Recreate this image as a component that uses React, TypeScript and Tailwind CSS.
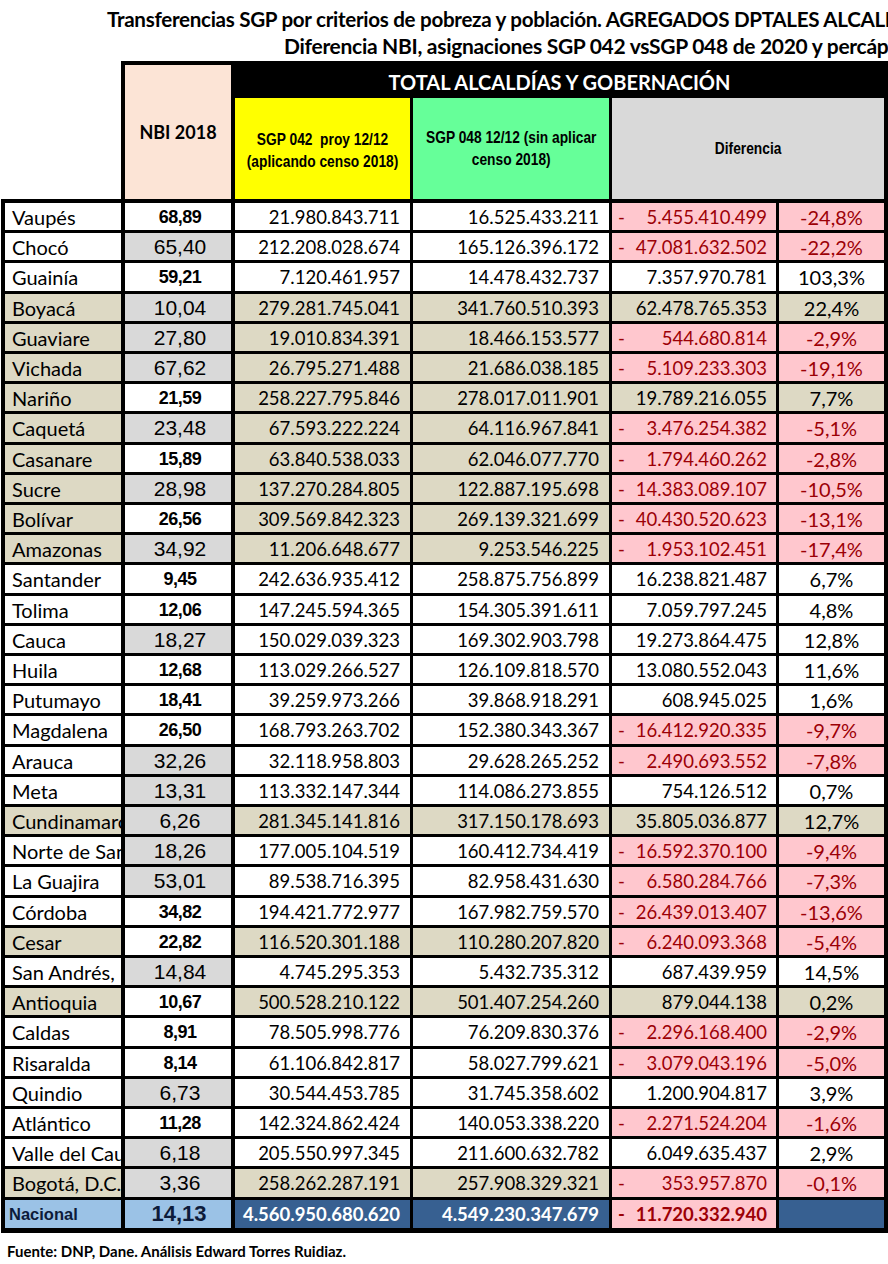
import React from "react"

type Row = {
  name: string
  nbi: string
  bold: boolean
  c: string
  d: string
  e: string
  f: string
  tan: boolean
}

// [name, nbi, bold nbi, sgp042, sgp048, diferencia, %, tan row]
const raw: [string, string, boolean, string, string, string, string, boolean][] = [
  ["Vaupés", "68,89", true, "21.980.843.711", "16.525.433.211", "-5.455.410.499", "-24,8%", false],
  ["Chocó", "65,40", false, "212.208.028.674", "165.126.396.172", "-47.081.632.502", "-22,2%", false],
  ["Guainía", "59,21", true, "7.120.461.957", "14.478.432.737", "7.357.970.781", "103,3%", false],
  ["Boyacá", "10,04", false, "279.281.745.041", "341.760.510.393", "62.478.765.353", "22,4%", true],
  ["Guaviare", "27,80", false, "19.010.834.391", "18.466.153.577", "-544.680.814", "-2,9%", true],
  ["Vichada", "67,62", false, "26.795.271.488", "21.686.038.185", "-5.109.233.303", "-19,1%", true],
  ["Nariño", "21,59", true, "258.227.795.846", "278.017.011.901", "19.789.216.055", "7,7%", true],
  ["Caquetá", "23,48", false, "67.593.222.224", "64.116.967.841", "-3.476.254.382", "-5,1%", true],
  ["Casanare", "15,89", true, "63.840.538.033", "62.046.077.770", "-1.794.460.262", "-2,8%", true],
  ["Sucre", "28,98", false, "137.270.284.805", "122.887.195.698", "-14.383.089.107", "-10,5%", true],
  ["Bolívar", "26,56", true, "309.569.842.323", "269.139.321.699", "-40.430.520.623", "-13,1%", true],
  ["Amazonas", "34,92", false, "11.206.648.677", "9.253.546.225", "-1.953.102.451", "-17,4%", true],
  ["Santander", "9,45", true, "242.636.935.412", "258.875.756.899", "16.238.821.487", "6,7%", false],
  ["Tolima", "12,06", true, "147.245.594.365", "154.305.391.611", "7.059.797.245", "4,8%", false],
  ["Cauca", "18,27", false, "150.029.039.323", "169.302.903.798", "19.273.864.475", "12,8%", false],
  ["Huila", "12,68", true, "113.029.266.527", "126.109.818.570", "13.080.552.043", "11,6%", false],
  ["Putumayo", "18,41", true, "39.259.973.266", "39.868.918.291", "608.945.025", "1,6%", false],
  ["Magdalena", "26,50", true, "168.793.263.702", "152.380.343.367", "-16.412.920.335", "-9,7%", false],
  ["Arauca", "32,26", false, "32.118.958.803", "29.628.265.252", "-2.490.693.552", "-7,8%", false],
  ["Meta", "13,31", false, "113.332.147.344", "114.086.273.855", "754.126.512", "0,7%", false],
  ["Cundinamarca", "6,26", false, "281.345.141.816", "317.150.178.693", "35.805.036.877", "12,7%", true],
  ["Norte de Santander", "18,26", false, "177.005.104.519", "160.412.734.419", "-16.592.370.100", "-9,4%", false],
  ["La Guajira", "53,01", false, "89.538.716.395", "82.958.431.630", "-6.580.284.766", "-7,3%", false],
  ["Córdoba", "34,82", true, "194.421.772.977", "167.982.759.570", "-26.439.013.407", "-13,6%", false],
  ["Cesar", "22,82", true, "116.520.301.188", "110.280.207.820", "-6.240.093.368", "-5,4%", true],
  ["San Andrés, Providencia y Santa Catalina", "14,84", false, "4.745.295.353", "5.432.735.312", "687.439.959", "14,5%", false],
  ["Antioquia", "10,67", true, "500.528.210.122", "501.407.254.260", "879.044.138", "0,2%", true],
  ["Caldas", "8,91", true, "78.505.998.776", "76.209.830.376", "-2.296.168.400", "-2,9%", false],
  ["Risaralda", "8,14", true, "61.106.842.817", "58.027.799.621", "-3.079.043.196", "-5,0%", false],
  ["Quindio", "6,73", false, "30.544.453.785", "31.745.358.602", "1.200.904.817", "3,9%", false],
  ["Atlántico", "11,28", true, "142.324.862.424", "140.053.338.220", "-2.271.524.204", "-1,6%", false],
  ["Valle del Cauca", "6,18", false, "205.550.997.345", "211.600.632.782", "6.049.635.437", "2,9%", false],
  ["Bogotá, D.C.", "3,36", false, "258.262.287.191", "257.908.329.321", "-353.957.870", "-0,1%", true],
]

const rows: Row[] = raw.map(([name, nbi, bold, c, d, e, f, tan]) => ({ name, nbi, bold, c, d, e, f, tan }))

const calibri = "font-['Lato',sans-serif]"
const arial = "font-['Liberation_Sans',Arial,sans-serif]"

const cols = "grid grid-cols-[120px_110px_178px_199px_167px_109px]"

function DataRow({ row, idx }: { row: Row; idx: number }) {
  const neg = row.e.startsWith("-")
  const rowBg = row.tan ? "bg-[#ddd9c4]" : "bg-white"
  const height = idx % 5 === 2 ? "h-[31px]" : "h-[30px]"

  return (
    <div className={`${cols} ${height} overflow-hidden border-b-[3px] border-black text-[18.5px] leading-[22px] text-black ${calibri}`}>
      <div className={`flex items-center overflow-hidden whitespace-nowrap border-r-4 border-black pl-[7px] text-[20px] ${rowBg}`}>
        {row.name}
      </div>
      <div
        className={`flex items-center justify-center border-r-4 border-black pl-[4px] ${arial} ${
          row.bold ? "bg-white text-[18px] font-bold tracking-[-0.5px]" : "bg-[#d9d9d9] text-[21px]"
        }`}
      >
        {row.nbi}
      </div>
      <div className={`flex items-center justify-end border-r-[3px] border-black pr-[10px] ${rowBg}`}>{row.c}</div>
      <div className={`flex items-center justify-end border-r-[3px] border-black pr-[10px] ${rowBg}`}>{row.d}</div>
      {neg ? (
        <div className="flex items-center justify-between border-r-[3px] border-black bg-[#ffc7ce] pl-[6px] pr-[9px] text-[#9c0006]">
          <span>-</span>
          <span>{row.e.slice(1)}</span>
        </div>
      ) : (
        <div className={`flex items-center justify-end border-r-[3px] border-black pr-[9px] ${rowBg}`}>{row.e}</div>
      )}
      <div
        className={`flex items-center justify-center border-r-4 border-black text-[20px] ${
          neg ? "bg-[#ffc7ce] text-[#9c0006]" : rowBg
        }`}
      >
        {row.f}
      </div>
    </div>
  )
}

export default function App() {
  return (
    <div className="h-[1264px] w-[888px] overflow-hidden bg-white">
      <div className={`h-[31px] overflow-hidden whitespace-nowrap pl-[107px] pt-[7px] text-[20.6px] font-bold leading-[24px] tracking-[-0.3px] text-black ${calibri}`}>
        Transferencias SGP por criterios de pobreza y población. AGREGADOS DPTALES ALCALDÍAS Y GOBERNACIÓN
      </div>
      <div className={`h-[30px] overflow-hidden whitespace-nowrap pl-[284px] pt-[3px] text-[21px] font-bold leading-[24px] tracking-[-0.3px] text-black ${calibri}`}>
        Diferencia NBI, asignaciones SGP 042 vsSGP 048 de 2020 y percápita
      </div>

      <div className="ml-[121px] flex w-[767px] bg-black px-[4px] pt-[4px]">
        <div className={`flex h-[134px] w-[106px] items-center justify-center bg-[#fce4d6] text-[18px] font-bold text-black ${calibri}`}>
          NBI 2018
        </div>
        <div className="ml-[4px] flex flex-1 flex-col">
          <div className={`flex h-[33px] items-center justify-center text-[20px] font-bold text-white ${calibri}`}>
            TOTAL ALCALDÍAS Y GOBERNACIÓN
          </div>
          <div className={`flex flex-1 gap-[3px] text-[17px] font-bold leading-[22px] text-black ${arial}`}>
            <div className="flex w-[175px] items-center justify-center overflow-hidden bg-[#ffff00]">
              <div className="flex scale-x-[0.81] flex-col items-center whitespace-nowrap pt-[4px]">
                <span className="whitespace-pre">SGP 042  proy 12/12</span>
                <span>(aplicando censo 2018)</span>
              </div>
            </div>
            <div className="flex w-[196px] items-center justify-center overflow-hidden bg-[#66ff99]">
              <div className="flex scale-x-[0.81] flex-col items-center whitespace-nowrap">
                <span>SGP 048 12/12 (sin aplicar</span>
                <span>censo 2018)</span>
              </div>
            </div>
            <div className="flex flex-1 items-center justify-center bg-[#d9d9d9]">
              <span className="scale-x-[0.81]">Diferencia</span>
            </div>
          </div>
        </div>
      </div>

      <div className="ml-[1px] w-[887px] border-l-4 border-t-4 border-black">
        {rows.map((r, i) => (
          <DataRow key={r.name} row={r} idx={i} />
        ))}
        <div className={`${cols} h-[33px] overflow-hidden border-b-[5px] border-black leading-[22px]`}>
          <div className={`flex items-center border-r-4 border-black bg-[#9bc2e6] pl-[4px] text-[16.5px] font-bold text-[#0d1b3a] ${arial}`}>
            Nacional
          </div>
          <div className={`flex items-center justify-center border-r-4 border-black bg-[#9bc2e6] pl-[2px] text-[22px] font-bold text-[#0d1b3a] ${arial}`}>
            14,13
          </div>
          <div className={`flex items-center justify-end border-r-[3px] border-black bg-[#376091] pr-[10px] text-[18.5px] font-bold text-white ${calibri}`}>
            4.560.950.680.620
          </div>
          <div className={`flex items-center justify-end border-r-[3px] border-black bg-[#376091] pr-[10px] text-[18.5px] font-bold text-white ${calibri}`}>
            4.549.230.347.679
          </div>
          <div className={`flex items-center justify-between border-r-[3px] border-black bg-[#ffc7ce] pl-[6px] pr-[9px] text-[18.5px] font-bold text-[#9c0006] ${calibri}`}>
            <span>-</span>
            <span>11.720.332.940</span>
          </div>
          <div className="border-r-4 border-black bg-[#376091]" />
        </div>
      </div>

      <div className={`pl-[7px] pt-[9px] text-[15px] font-bold leading-[18px] text-black ${calibri}`}>
        Fuente: DNP, Dane. Análisis Edward Torres Ruidiaz.
      </div>
    </div>
  )
}
